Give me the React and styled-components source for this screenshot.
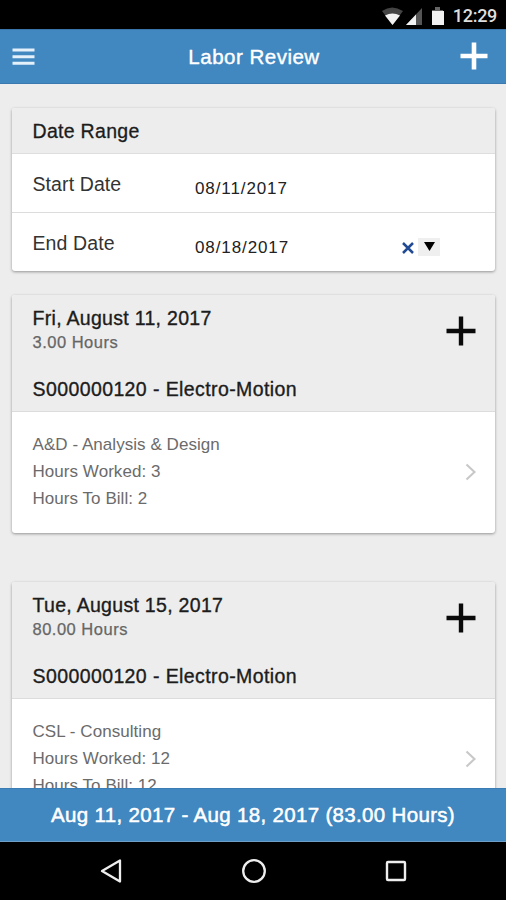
import React from 'react';
import styled, { createGlobalStyle } from 'styled-components';

const GlobalStyle = createGlobalStyle`
  * {
    box-sizing: border-box;
  }

  body {
    margin: 0;
    background: #ededed;
    color: #1c1c1c;
    font-family: 'Liberation Sans', Arial, sans-serif;
  }

  svg {
    display: block;
  }
`;

const Screen = styled.div`
  display: flex;
  flex-direction: column;
  width: 506px;
  height: 900px;
  overflow: hidden;
`;

const StatusBar = styled.div`
  display: flex;
  flex: none;
  align-items: center;
  justify-content: flex-end;
  height: 29px;
  padding: 3px 9px 0 0;
  background: #000;
`;

const Clock = styled.span`
  margin-left: 8px;
  color: #dedede;
  font-family: Roboto, sans-serif;
  font-size: 18px;
  font-weight: 500;
  line-height: 26px;
  letter-spacing: -0.3px;
`;

const AppBar = styled.header`
  display: grid;
  flex: none;
  grid-template-columns: 60px 1fr 60px;
  align-items: center;
  height: 55px;
  padding: 0 18px 0 12px;
  border-top: 1px solid #3975aa;
  border-bottom: 1px solid #3a79af;
  background: #4187c0;
  color: #fff;
`;

const Title = styled.h1`
  margin: 0;
  padding-left: 8px;
  font-size: 20.5px;
  font-weight: 400;
  line-height: 24px;
  letter-spacing: 0.5px;
  text-align: center;
  -webkit-text-stroke: 0.4px;
`;

const BarAction = styled.div`
  display: flex;
  justify-content: ${({ $end }) => ($end ? 'flex-end' : 'flex-start')};
  padding-bottom: ${({ $end }) => ($end ? '2px' : 0)};
`;

const Content = styled.main`
  flex: 1;
  min-height: 0;
  padding: 24px 11px 0 12px;
  overflow: hidden;
`;

const Card = styled.section`
  margin-bottom: ${({ $gap }) => $gap}px;
  overflow: hidden;
  border-radius: 3px;
  background: #fff;
  box-shadow: 0 1px 3px rgba(0, 0, 0, 0.38);
`;

const CardTitle = styled.h2`
  height: 46px;
  margin: 0;
  padding-left: 20.5px;
  border-bottom: 1px solid #dedede;
  background: #ededed;
  font-size: 19.5px;
  font-weight: 400;
  line-height: 47px;
  letter-spacing: 0.3px;
  -webkit-text-stroke: 0.3px;
`;

const Field = styled.div`
  display: flex;
  height: 58px;
  padding: 0 55px 0 20.5px;

  & + & {
    height: 59px;
    border-top: 1px solid #dcdcdc;
  }
`;

const FieldLabel = styled.span`
  width: 162.5px;
  padding-top: 19px;
  color: #333;
  font-size: 19.5px;
  line-height: 22px;
  letter-spacing: 0.1px;
`;

const FieldValue = styled.span`
  flex: 1;
  padding-top: 25px;
  color: #222;
  font-size: 17px;
  line-height: 20px;
  letter-spacing: 0.9px;
`;

const DateTools = styled.div`
  display: flex;
  align-items: flex-start;
  gap: 4px;
  padding-top: 25px;
`;

const ClearIcon = styled.svg`
  margin-top: 4px;
`;

const DropButton = styled.div`
  display: flex;
  justify-content: center;
  width: 22px;
  height: 18px;
  padding-top: 4px;
  background: #efefef;
`;

const DayHeader = styled.div`
  display: flex;
  justify-content: space-between;
  height: 117px;
  padding: 12px 19px 0 20.5px;
  border-bottom: 1px solid #dcdcdc;
  background: #ededed;
`;

const DayTitle = styled.h2`
  margin: 0;
  font-size: 19.5px;
  font-weight: 400;
  line-height: 23px;
  letter-spacing: 0.3px;
  -webkit-text-stroke: 0.35px;
`;

const DayHours = styled.div`
  color: #666;
  font-size: 16.5px;
  line-height: 25px;
  letter-spacing: 0.5px;
  -webkit-text-stroke: 0.25px;
`;

const Order = styled(DayTitle).attrs({ as: 'h3' })`
  margin-top: 23px;
  letter-spacing: 0.4px;
`;

const AddIcon = styled.svg`
  margin-top: 9px;
`;

const Entry = styled.div`
  display: flex;
  align-items: center;
  justify-content: space-between;
  height: 121px;
  padding: 0 18px 1px 20.5px;
`;

const EntryLines = styled.div`
  padding-bottom: 1px;
  color: #6b6b6b;
  font-size: 17px;
  line-height: 27.2px;
  letter-spacing: 0.05px;
`;

const Summary = styled.footer`
  flex: none;
  height: 54px;
  border-top: 1px solid #3a7db4;
  border-bottom: 1px solid #6f9fc6;
  background: #4187c0;
  color: #fff;
  font-size: 20.5px;
  line-height: 52px;
  letter-spacing: 0.33px;
  text-align: center;
  -webkit-text-stroke: 0.5px;
`;

const NavBar = styled.nav`
  display: flex;
  flex: none;
  align-items: center;
  justify-content: space-between;
  height: 58px;
  padding: 0 98px 0 99px;
  background: #000;
`;

const days = [
  {
    date: 'Fri, August 11, 2017',
    hours: '3.00 Hours',
    order: 'S000000120 - Electro-Motion',
    work: 'A&D - Analysis & Design',
    worked: 3,
    billed: 2,
  },
  {
    date: 'Tue, August 15, 2017',
    hours: '80.00 Hours',
    order: 'S000000120 - Electro-Motion',
    work: 'CSL - Consulting',
    worked: 12,
    billed: 12,
  },
];

const StatusIcons = () => (
  <svg width="66" height="22" viewBox="0 0 66 22">
    <path d="M3 6Q13 -1 24 6L13.5 20Z" fill="#444" />
    <path d="M6 10.5Q13.5 6.5 21 10.5L13.5 20Z" fill="#f2f2f2" />
    <path d="M27 20L43 3V20Z" fill="#555" />
    <path d="M27 20L37 9.5V20Z" fill="#f2f2f2" />
    <path d="M56 2h5v3h3v15H53V5h3Z" fill="#666" />
    <path d="M53 6h12v14H53Z" fill="#f2f2f2" />
  </svg>
);

const DayCard = ({ day }) => (
  <Card $gap={49}>
    <DayHeader>
      <div>
        <DayTitle>{day.date}</DayTitle>
        <DayHours>{day.hours}</DayHours>
        <Order>{day.order}</Order>
      </div>
      <AddIcon width="30" height="30" viewBox="0 0 30 30">
        <path d="M15 0.5V29.5M0.5 15H29.5" stroke="#0a0a0a" strokeWidth="4.4" />
      </AddIcon>
    </DayHeader>
    <Entry>
      <EntryLines>
        <div>{day.work}</div>
        <div>Hours Worked: {day.worked}</div>
        <div>Hours To Bill: {day.billed}</div>
      </EntryLines>
      <svg width="12" height="18" viewBox="0 0 12 18">
        <path d="M1.5 1.5L9.5 9L1.5 16.5" fill="none" stroke="#c8c8c8" strokeWidth="2.1" />
      </svg>
    </Entry>
  </Card>
);

const App = () => (
  <Screen>
    <GlobalStyle />
    <StatusBar>
      <StatusIcons />
      <Clock>12:29</Clock>
    </StatusBar>

    <AppBar>
      <BarAction>
        <svg width="23" height="18" viewBox="0 0 23 18">
          <path d="M0.5 2H22.5M0.5 8.7H22.5M0.5 15.3H22.5" stroke="#e4f0fa" strokeWidth="2.9" />
        </svg>
      </BarAction>
      <Title>Labor Review</Title>
      <BarAction $end>
        <svg width="28" height="28" viewBox="0 0 28 28">
          <path d="M14 0.5V27.5M0.5 14H27.5" stroke="#fff" strokeWidth="4.6" />
        </svg>
      </BarAction>
    </AppBar>

    <Content>
      <Card $gap={24}>
        <CardTitle>Date Range</CardTitle>
        <Field>
          <FieldLabel>Start Date</FieldLabel>
          <FieldValue>08/11/2017</FieldValue>
        </Field>
        <Field>
          <FieldLabel>End Date</FieldLabel>
          <FieldValue>08/18/2017</FieldValue>
          <DateTools>
            <ClearIcon width="12" height="12" viewBox="0 0 12 12">
              <path d="M1 1L11 11M11 1L1 11" stroke="#204a94" strokeWidth="2.5" />
            </ClearIcon>
            <DropButton>
              <svg width="11" height="9" viewBox="0 0 11 9">
                <path d="M0 0H11L5.5 9Z" fill="#000" />
              </svg>
            </DropButton>
          </DateTools>
        </Field>
      </Card>

      {days.map(day => (
        <DayCard key={day.date} day={day} />
      ))}
    </Content>

    <Summary>Aug 11, 2017 - Aug 18, 2017 (83.00 Hours)</Summary>

    <NavBar>
      <svg width="24" height="26" viewBox="0 0 24 26">
        <path d="M21 2.5V23.5L3 13Z" fill="none" stroke="#eee" strokeWidth="2.3" strokeLinejoin="round" />
      </svg>
      <svg width="26" height="26" viewBox="0 0 26 26">
        <circle cx="13" cy="13" r="10.8" fill="none" stroke="#eee" strokeWidth="2.3" />
      </svg>
      <svg width="24" height="24" viewBox="0 0 24 24">
        <rect x="3" y="3" width="18" height="18" rx="1" fill="none" stroke="#eee" strokeWidth="2.4" />
      </svg>
    </NavBar>
  </Screen>
);

export default App;
